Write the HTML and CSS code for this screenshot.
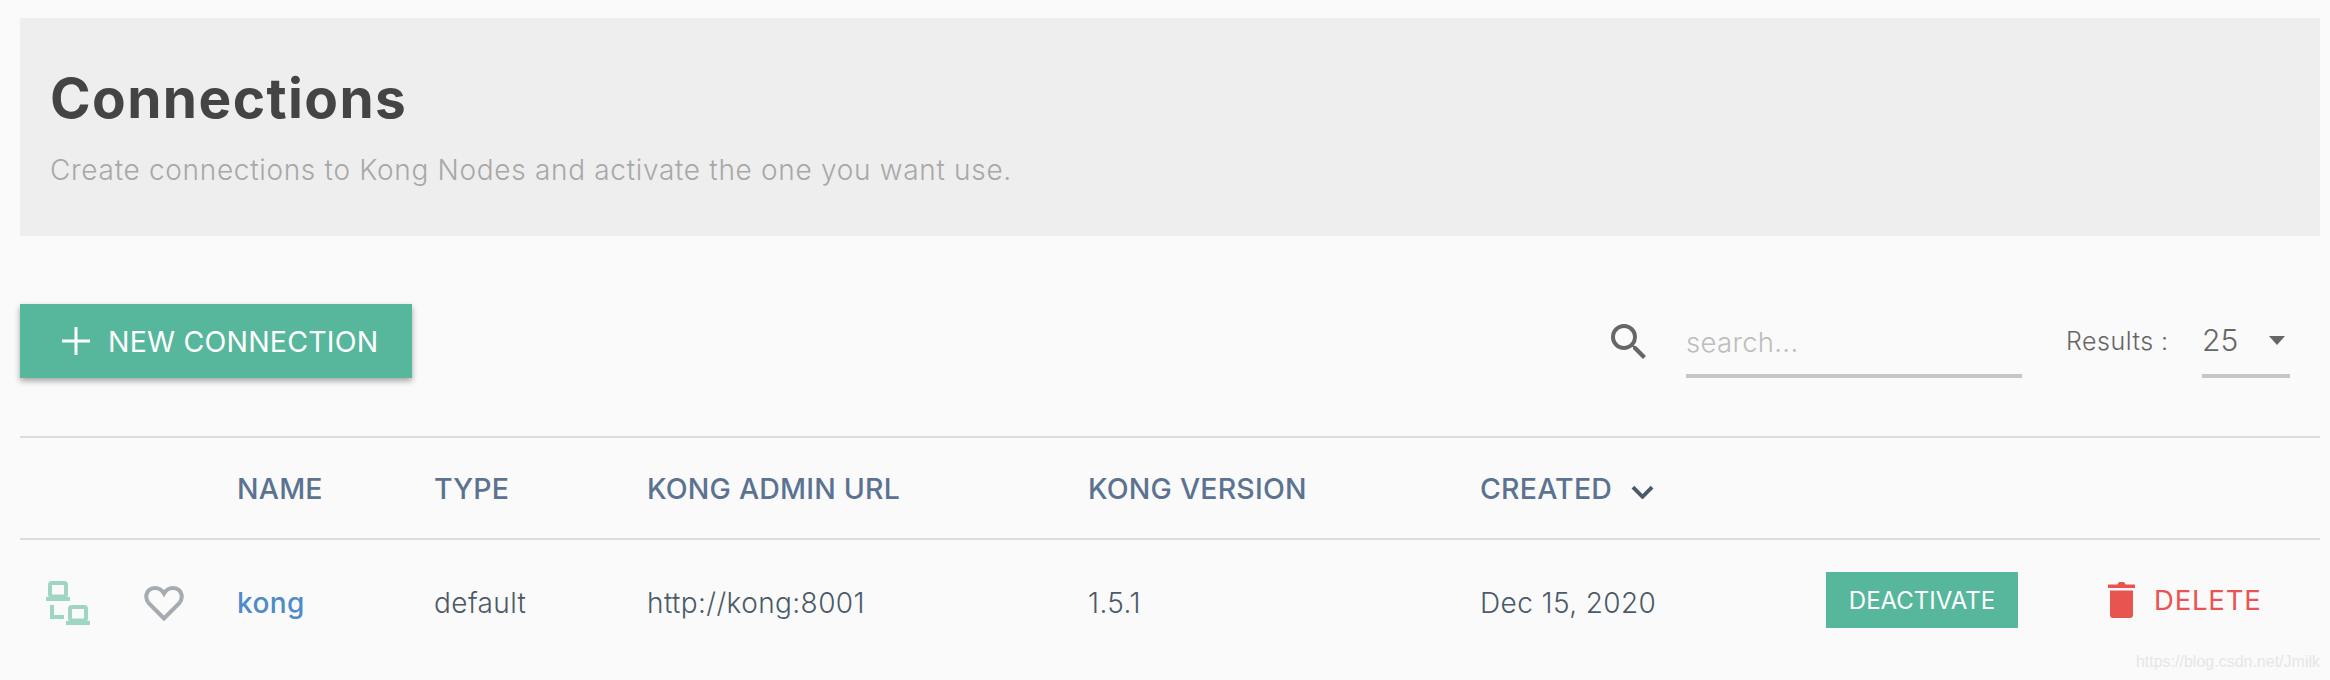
FILE: index.html
```html
<!DOCTYPE html>
<html lang="en">
<head>
    <meta charset="UTF-8">
    <title>Connections</title>
    <link rel="stylesheet" href="styles.css">
</head>
<body>
    <div class="page-header">
        <h1>Connections</h1>
        <p>Create connections to Kong Nodes and activate the one you want use.</p>
    </div>

    <div class="toolbar">
        <button class="new-button">
            <svg class="plus-icon" viewBox="0 0 28 28"><path d="M14 0v28M0 14h28"/></svg>
            NEW CONNECTION
        </button>
        <div class="toolbar-right">
            <svg class="search-icon" viewBox="0 0 24 24"><path d="M15.5 14h-.79l-.28-.27A6.47 6.47 0 0 0 16 9.5 6.5 6.5 0 1 0 9.5 16c1.61 0 3.09-.59 4.23-1.57l.27.28v.79l5 4.99L20.49 19l-4.99-5zm-6 0C7.01 14 5 11.99 5 9.5S7.01 5 9.5 5 14 7.01 14 9.5 11.99 14 9.5 14z"/></svg>
            <div class="search-box">search...</div>
            <span class="results-label">Results :</span>
            <div class="results-select">
                <span>25</span>
                <span class="caret"></span>
            </div>
        </div>
    </div>

    <table class="conn-table">
        <colgroup>
            <col class="col-status">
            <col class="col-fav">
            <col class="col-name">
            <col class="col-type">
            <col class="col-url">
            <col class="col-version">
            <col class="col-created">
            <col class="col-activate">
            <col>
        </colgroup>
        <thead>
            <tr>
                <th></th>
                <th></th>
                <th>NAME</th>
                <th>TYPE</th>
                <th>KONG ADMIN URL</th>
                <th>KONG VERSION</th>
                <th>CREATED<svg class="sort-icon" viewBox="0 0 24 14"><path d="M2 2l10 10 10-10"/></svg></th>
                <th></th>
                <th></th>
            </tr>
        </thead>
        <tbody>
            <tr>
                <td>
                    <svg class="conn-icon" viewBox="0 0 44 44">
                        <path d="M4 0h12a4 4 0 0 1 4 4v10a4 4 0 0 1-2 3H2a4 4 0 0 1-2-3V4a4 4 0 0 1 4-4zm0 4v9.500h12V4z" transform="translate(2 0)"/>
                        <rect x="0" y="16" width="24" height="4"/>
                        <path d="M4 0h12a4 4 0 0 1 4 4v10a4 4 0 0 1-2 3H2a4 4 0 0 1-2-3V4a4 4 0 0 1 4-4zm0 4v9.500h12V4z" transform="translate(22 24)"/>
                        <rect x="20" y="40" width="24" height="4"/>
                        <path d="M4 24h4v10h10v4H4z"/>
                    </svg>
                </td>
                <td>
                    <svg class="heart-icon" viewBox="0 0 40 36"><path d="M20 33.500 5 18.500C-.5 12 3 3 11 3c4 0 7 2 9 5.500C22 5 25 3 29 3c8 0 11.500 9 6 15.500z"/></svg>
                </td>
                <td><a class="conn-link">kong</a></td>
                <td>default</td>
                <td>http://kong:8001</td>
                <td>1.5.1</td>
                <td>Dec 15, 2020</td>
                <td><button class="activate-button">DEACTIVATE</button></td>
                <td>
                    <span class="delete-link">
                        <svg class="trash-icon" viewBox="0 0 27 36"><path d="M0 2.500h9.500L11 0h5l1.500 2.500H27V6H0zM2 8.500h23V33a3 3 0 0 1-3 3H5a3 3 0 0 1-3-3z"/></svg>
                        DELETE
                    </span>
                </td>
            </tr>
        </tbody>
    </table>

    <div class="watermark">https://blog.csdn.net/Jmilk</div>
</body>
</html>
```

FILE: styles.css
```css
html, body {
    height: 100%;
}
body {
    font-family: 'Inter', 'Open Sans', sans-serif;
    color: #4a4a4a;
    background-color: #fafafa;
    margin: 0;
    padding: 18px 10px 0 20px;
    box-sizing: border-box;
    overflow: hidden;
    position: relative;
}
.page-header {
    height: 218px;
    box-sizing: border-box;
    background-color: #eeeeee;
    padding: 44px 30px 0;
}
.page-header h1 {
    margin: 0;
    font-size: 55px;
    line-height: 72px;
    font-weight: 700;
    color: #444444;
    letter-spacing: 1.4px;
}
.page-header p {
    margin: 18px 0 0;
    font-size: 28px;
    line-height: 36px;
    font-weight: 300;
    color: #a8a8a8;
    letter-spacing: 0.69px;
}
.toolbar {
    display: flex;
    justify-content: space-between;
    align-items: flex-start;
    margin-top: 68px;
    height: 132px;
}
.new-button {
    display: flex;
    align-items: center;
    gap: 18px;
    width: 392px;
    height: 74px;
    padding: 0 0 0 42px;
    border: none;
    background-color: #57b79c;
    color: #ffffff;
    font-family: inherit;
    font-size: 28.5px;
    font-weight: 400;
    letter-spacing: 0.2px;
    box-shadow: 0 3px 6px rgba(0, 0, 0, 0.35);
}
.plus-icon {
    width: 28px;
    height: 28px;
    fill: none;
    stroke: #ffffff;
    stroke-width: 3;
}
.toolbar-right {
    display: flex;
    align-items: flex-start;
    margin-right: 30px;
}
.search-icon {
    width: 48px;
    height: 48px;
    margin-top: 14px;
    fill: #666666;
}
.search-box {
    width: 336px;
    height: 74px;
    margin-left: 33px;
    box-sizing: border-box;
    padding-top: 21px;
    border-bottom: 4px solid #c6c6c6;
    font-size: 27.5px;
    font-weight: 300;
    color: #bdbdbd;
    letter-spacing: 0.3px;
}
.results-label {
    width: 103px;
    margin-left: 44px;
    padding-top: 22px;
    font-size: 25px;
    font-weight: 300;
    color: #666666;
    letter-spacing: 0.5px;
    white-space: nowrap;
}
.results-select {
    display: flex;
    justify-content: space-between;
    width: 88px;
    height: 74px;
    margin-left: 33px;
    box-sizing: border-box;
    padding-top: 18px;
    border-bottom: 4px solid #c6c6c6;
    font-size: 30px;
    font-weight: 300;
    color: #666666;
}
.caret {
    width: 0;
    height: 0;
    margin: 14px 5px 0 0;
    border-left: 8px solid transparent;
    border-right: 8px solid transparent;
    border-top: 9px solid #666666;
}
.conn-table {
    width: 100%;
    table-layout: fixed;
    border-collapse: collapse;
}
.col-status { width: 105px; }
.col-fav { width: 112px; }
.col-name { width: 197px; }
.col-type { width: 213px; }
.col-url { width: 441px; }
.col-version { width: 392px; }
.col-created { width: 344px; }
.col-activate { width: 281px; }
.conn-table th {
    height: 100px;
    padding: 0;
    border-top: 2px solid #dcdcdc;
    border-bottom: 2px solid #dcdcdc;
    text-align: left;
    font-size: 28.5px;
    font-weight: 500;
    color: #5b7391;
    letter-spacing: 0.2px;
}
.conn-table td {
    height: 118px;
    padding: 4px 0 0;
    font-size: 28px;
    font-weight: 300;
    color: #4c5a67;
    letter-spacing: 0.4px;
}
.sort-icon {
    width: 23px;
    height: 14px;
    margin-left: 19px;
    fill: none;
    stroke: #4a5a6b;
    stroke-width: 4;
}
.conn-icon {
    display: block;
    width: 44px;
    height: 44px;
    margin-left: 26px;
    fill: #9fd5c3;
}
.heart-icon {
    display: block;
    width: 40px;
    height: 36px;
    margin-left: 19px;
    fill: none;
    stroke: #a5abb0;
    stroke-width: 4;
}
.conn-link {
    font-weight: 500;
    color: #4f8ac9;
}
.activate-button {
    display: block;
    width: 192px;
    height: 56px;
    margin: -6px 0 0 2px;
    padding: 0;
    border: none;
    background-color: #57b79c;
    color: #ffffff;
    font-family: inherit;
    font-size: 24px;
    font-weight: 400;
}
.delete-link {
    display: inline-flex;
    align-items: center;
    gap: 19px;
    margin-left: 3px;
    font-size: 27.5px;
    font-weight: 400;
    color: #e85550;
    letter-spacing: 0.8px;
}
.trash-icon {
    width: 27px;
    height: 36px;
    fill: #e85550;
}
.watermark {
    position: absolute;
    right: 10px;
    bottom: 9px;
    font-family: 'Liberation Sans', sans-serif;
    font-size: 16px;
    color: #e6e6e6;
}
```
